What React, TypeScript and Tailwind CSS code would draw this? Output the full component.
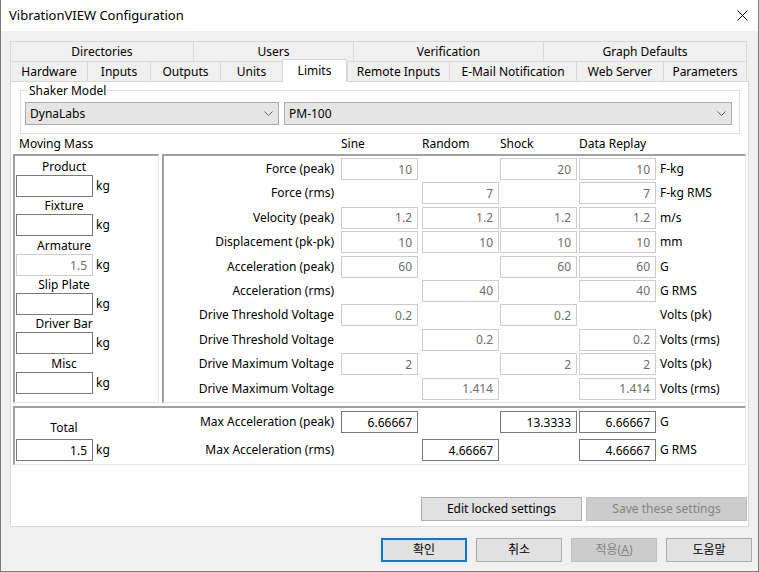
import React from "react"

type Cell = string | null

const topTabs = [
  { label: "Directories", w: "w-[183px]" },
  { label: "Users", w: "w-[160px]" },
  { label: "Verification", w: "w-[190px]" },
  { label: "Graph Defaults", w: "w-[204px]" },
]

const bottomTabs = [
  { label: "Hardware", w: "w-[77px]" },
  { label: "Inputs", w: "w-[63px]" },
  { label: "Outputs", w: "w-[70px]" },
  { label: "Units", w: "w-[62px]" },
  { label: "Limits", w: "w-[65px]", active: true },
  { label: "Remote Inputs", w: "w-[102px]" },
  { label: "E-Mail Notification", w: "w-[127px]" },
  { label: "Web Server", w: "w-[87px]" },
  { label: "Parameters", w: "w-[84px]" },
]

const massRows = [
  { label: "Product", value: "", disabled: false },
  { label: "Fixture", value: "", disabled: false },
  { label: "Armature", value: "1.5", disabled: true },
  { label: "Slip Plate", value: "", disabled: false },
  { label: "Driver Bar", value: "", disabled: false },
  { label: "Misc", value: "", disabled: false },
]

const limitRows: { label: string; values: Cell[]; unit: string }[] = [
  { label: "Force (peak)", values: ["10", null, "20", "10"], unit: "F-kg" },
  { label: "Force (rms)", values: [null, "7", null, "7"], unit: "F-kg RMS" },
  { label: "Velocity (peak)", values: ["1.2", "1.2", "1.2", "1.2"], unit: "m/s" },
  { label: "Displacement (pk-pk)", values: ["10", "10", "10", "10"], unit: "mm" },
  { label: "Acceleration (peak)", values: ["60", null, "60", "60"], unit: "G" },
  { label: "Acceleration (rms)", values: [null, "40", null, "40"], unit: "G RMS" },
  { label: "Drive Threshold Voltage", values: ["0.2", null, "0.2", null], unit: "Volts (pk)" },
  { label: "Drive Threshold Voltage", values: [null, "0.2", null, "0.2"], unit: "Volts (rms)" },
  { label: "Drive Maximum Voltage", values: ["2", null, "2", "2"], unit: "Volts (pk)" },
  { label: "Drive Maximum Voltage", values: [null, "1.414", null, "1.414"], unit: "Volts (rms)" },
]

const maxRows: { label: string; values: Cell[]; unit: string }[] = [
  { label: "Max Acceleration (peak)", values: ["6.66667", null, "13.3333", "6.66667"], unit: "G" },
  { label: "Max Acceleration (rms)", values: [null, "4.66667", null, "4.66667"], unit: "G RMS" },
]

// column cells: Sine, Random, Shock, Data Replay
const colWidths = ["w-[81px]", "w-[78px]", "w-[79px]", "w-[81px]"]

function Field({ value = "", disabled = false }: { value?: string; disabled?: boolean }) {
  return (
    <input
      readOnly
      value={value}
      className={`h-[22px] w-[77px] border bg-white pr-[5px] text-right text-[12px] outline-none ${
        disabled ? "border-[#cccccc] text-[#6d6d6d]" : "border-[#7a7a7a] text-black"
      }`}
    />
  )
}

function Chevron() {
  return (
    <svg width="9" height="5" viewBox="0 0 9 5" className="shrink-0">
      <polyline points="0.5,0.5 4.5,4.5 8.5,0.5" fill="none" stroke="#606060" strokeWidth="1" />
    </svg>
  )
}

function Select({ text, w }: { text: string; w: string }) {
  return (
    <div className={`${w} flex h-[23px] items-center justify-between border border-[#adadad] bg-[#e5e5e5] pl-[4px] pr-[5px]`}>
      <span>{text}</span>
      <Chevron />
    </div>
  )
}

function LimitRow({ label, values, unit, active }: { label: string; values: Cell[]; unit: string; active?: boolean }) {
  return (
    <div className="flex h-[22px] items-center">
      <div className="w-[177px] pr-[7px] text-right">{label}</div>
      {values.map((v, i) => (
        <div key={i} className={colWidths[i]}>
          {v !== null && <Field value={v} disabled={!active} />}
        </div>
      ))}
      <div>{unit}</div>
    </div>
  )
}

const sunken =
  "border-t-2 border-l-2 border-r border-b border-t-[#a0a0a0] border-l-[#a0a0a0] border-r-[#e3e3e3] border-b-[#e3e3e3]"

export default function App() {
  return (
    <div className="flex h-[572px] w-[759px] flex-col overflow-hidden border-x border-b border-[#7a7a7a] bg-[#f0f0f0] font-['Noto_Sans','Noto_Sans_CJK_KR',sans-serif] text-[12px] text-black">
      {/* Title bar */}
      <div className="flex h-[31px] shrink-0 items-center justify-between bg-white pl-[8px] pr-[10px]">
        <span className="text-[13px]">VibrationVIEW Configuration</span>
        <svg width="11" height="11" viewBox="0 0 11 11">
          <path d="M0.5 0.5 L10.5 10.5 M10.5 0.5 L0.5 10.5" stroke="#000" strokeWidth="1" />
        </svg>
      </div>

      {/* Tabs */}
      <div className="ml-[9px] mt-[10px] flex h-[20px]">
        {topTabs.map((t, i) => (
          <div
            key={t.label}
            className={`${t.w} flex items-center justify-center border-l border-t border-[#d9d9d9] ${
              i === topTabs.length - 1 ? "border-r" : ""
            }`}
          >
            {t.label}
          </div>
        ))}
      </div>
      <div className="ml-[9px] flex h-[20px] items-end">
        {bottomTabs.map((t, i) =>
          t.active ? (
            <div
              key={t.label}
              className={`${t.w} relative z-10 -mb-px flex h-[23px] items-center justify-center border-x border-t border-[#d9d9d9] bg-white pb-[1px]`}
            >
              {t.label}
            </div>
          ) : (
            <div
              key={t.label}
              className={`${t.w} flex h-[20px] items-center justify-center border-l border-t border-[#d9d9d9] ${
                i === bottomTabs.length - 1 ? "border-r" : ""
              }`}
            >
              {t.label}
            </div>
          )
        )}
      </div>

      {/* Limits panel */}
      <div className="ml-[9px] flex h-[446px] w-[739px] shrink-0 flex-col border border-[#d9d9d9] bg-white">
        {/* Shaker Model */}
        <div className="relative ml-[9px] mt-[8px] flex h-[44px] w-[720px] gap-[5px] border border-[#dcdcdc] pl-[4px] pt-[11px]">
          <span className="absolute left-[7px] top-[-9px] bg-white px-[1px] leading-[17px]">Shaker Model</span>
          <Select text="DynaLabs" w="w-[254px]" />
          <Select text="PM-100" w="w-[448px]" />
        </div>

        {/* column headers */}
        <div className="flex h-[20px] items-center">
          <div className="w-[330px] pl-[8px]">Moving Mass</div>
          <div className="w-[81px]">Sine</div>
          <div className="w-[78px]">Random</div>
          <div className="w-[79px]">Shock</div>
          <div>Data Replay</div>
        </div>

        <div className="flex">
          {/* Moving mass */}
          <div className={`ml-[2px] h-[249px] w-[146px] ${sunken} pl-[1px] pt-[2px]`}>
            <div className="flex w-[96px] flex-col">
              {massRows.map((m, i) => (
                <div key={m.label} className={i === 2 || i === 5 ? "mt-[1px]" : ""}>
                  <div className="h-[17px] text-center leading-[17px]">{m.label}</div>
                  <div className="flex items-center">
                    <Field value={m.value} disabled={m.disabled} />
                    <span className="ml-[3px]">kg</span>
                  </div>
                </div>
              ))}
            </div>
          </div>

          {/* Limits grid */}
          <div className={`ml-[3px] h-[249px] w-[584px] ${sunken} pt-[2px]`}>
            <div className="flex flex-col gap-y-[2.4px]">
              {limitRows.map((r, i) => (
                <LimitRow key={i} label={r.label} values={r.values} unit={r.unit} />
              ))}
            </div>
          </div>
        </div>

        {/* Totals */}
        <div className={`ml-[2px] mt-[3px] flex h-[59px] w-[733px] ${sunken}`}>
          <div className="w-[149px] pl-[1px] pt-[11px]">
            <div className="w-[96px]">
              <div className="h-[17px] text-center leading-[17px]">Total</div>
              <div className="mt-[3px] flex items-center">
                <Field value="1.5" />
                <span className="ml-[3px]">kg</span>
              </div>
            </div>
          </div>
          <div className="flex flex-col gap-y-[6px] pt-[3px]">
            {maxRows.map((r, i) => (
              <LimitRow key={i} label={r.label} values={r.values} unit={r.unit} active />
            ))}
          </div>
        </div>

        <div className="mt-[32px] flex justify-end gap-[4px] pr-[1px]">
          <button className="flex h-[24px] w-[161px] items-center justify-center border border-[#adadad] bg-[#e1e1e1]">
            Edit locked settings
          </button>
          <button className="flex h-[24px] w-[161px] items-center justify-center border border-[#bfbfbf] bg-[#cccccc] text-[#838383]">
            Save these settings
          </button>
        </div>
      </div>

      {/* Dialog buttons */}
      <div className="mt-[11px] flex justify-end gap-[9px] pr-[6px]">
        <button className="flex h-[24px] w-[86px] items-center justify-center border-2 border-[#0078d7] bg-[#e1e1e1]">
          확인
        </button>
        <button className="flex h-[24px] w-[86px] items-center justify-center border border-[#adadad] bg-[#e1e1e1]">
          취소
        </button>
        <button className="flex h-[24px] w-[86px] items-center justify-center border border-[#bfbfbf] bg-[#cccccc] text-[#838383]">
          적용(<span className="underline">A</span>)
        </button>
        <button className="flex h-[24px] w-[86px] items-center justify-center border border-[#adadad] bg-[#e1e1e1]">
          도움말
        </button>
      </div>
    </div>
  )
}
